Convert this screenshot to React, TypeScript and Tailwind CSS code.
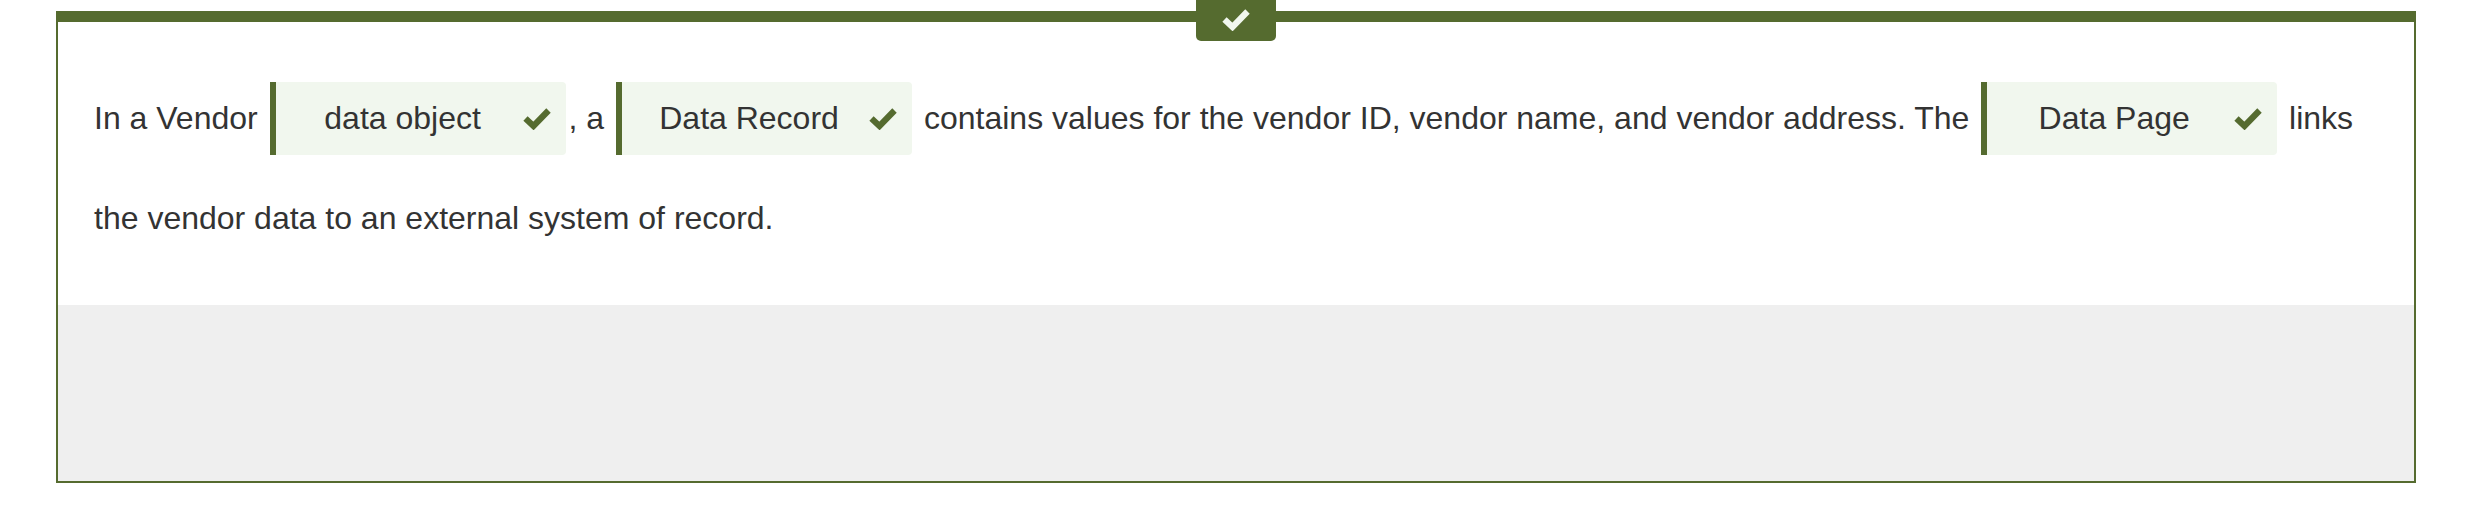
import React from 'react';

const green = '#556b2f';

const Check: React.FC<{ color: string }> = ({ color }) => (
  <svg width="28" height="23" viewBox="0 0 28 23" className="shrink-0">
    <polyline points="2.5,11.5 10.5,19 25.5,3.5" fill="none" stroke={color} strokeWidth="6.2" strokeLinejoin="miter" />
  </svg>
);

const Answer: React.FC<{ label: string }> = ({ label }) => (
  <span className="inline-flex items-center align-baseline w-[296px] h-[73px] mx-[3px] border-l-[6px] border-[#556b2f] bg-[#f1f7ee] rounded-r-[4px] pl-[7px] pr-[15px] leading-[36px]">
    <span className="flex-1 text-center">{label}</span>
    <Check color={green} />
  </span>
);

const App: React.FC = () => {
  return (
    <div className="w-[2466px] h-[520px] bg-white pt-[11px]" style={{ fontFamily: '"Liberation Sans", Arial, sans-serif' }}>
      <div className="relative ml-[56px] w-[2360px] h-[472px] border-2 border-t-[11px] border-[#556b2f] flex flex-col">
        {/* status badge */}
        <div className="absolute left-1/2 -translate-x-1/2 top-[-22px] w-[80px] h-[41px] bg-[#556b2f] rounded-b-[5px] flex items-center justify-center pb-[2px]">
          <Check color="#f1f7ee" />
        </div>
        <div className="bg-white pl-[36px] pr-[36px] pt-[46px] h-[283px]">
          <p className="text-[32px] leading-[100px] text-[#333333]">
            In a Vendor{' '}<Answer label="data object" />, a{' '}<Answer label="Data Record" /> contains values for the vendor ID, vendor name, and vendor address. The{' '}<Answer label="Data Page" /> links the vendor data to an external system of record.
          </p>
        </div>
        <div className="flex-1 bg-[#efefef]"></div>
      </div>
    </div>
  );
};

export default App;
